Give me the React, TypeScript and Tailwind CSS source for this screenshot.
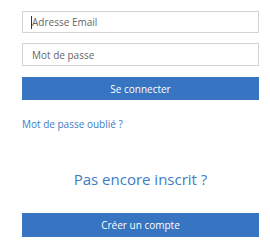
import React from "react";

export default function App() {
  return (
    <div className="w-[270px] h-[246px] bg-white" style={{ fontFamily: '"Open Sans", sans-serif' }}>
      <div className="ml-[22px] w-[237px] pt-[11px] flex flex-col">
        <div className="relative h-[22px]">
          <input
            className="block w-full h-[22px] border border-[#d4d4d4] px-[9px] text-[10px] text-[#555] placeholder:text-[#666] outline-none"
            placeholder="Adresse Email"
          />
          <span className="absolute left-[9px] top-[5px] w-px h-[13px] bg-[#333]" />
        </div>
        <input
          className="block mt-[10px] h-[23px] border border-[#d4d4d4] px-[9px] text-[10px] placeholder:text-[#666] outline-none"
          placeholder="Mot de passe"
        />
        <button className="mt-[11px] h-[23px] bg-[#3774c1] text-white text-[10px] leading-none">
          Se connecter
        </button>
        <a className="mt-[17px] text-[10px] text-[#3d7cc6] leading-[14px]">Mot de passe oublié ?</a>
        <div className="mt-[38px] text-center text-[15px] leading-[20px] text-[#3d7cc6]">Pas encore inscrit ?</div>
        <button className="mt-[24px] h-[24px] bg-[#3774c1] text-white text-[10px] leading-none">
          Créer un compte
        </button>
      </div>
    </div>
  );
}
